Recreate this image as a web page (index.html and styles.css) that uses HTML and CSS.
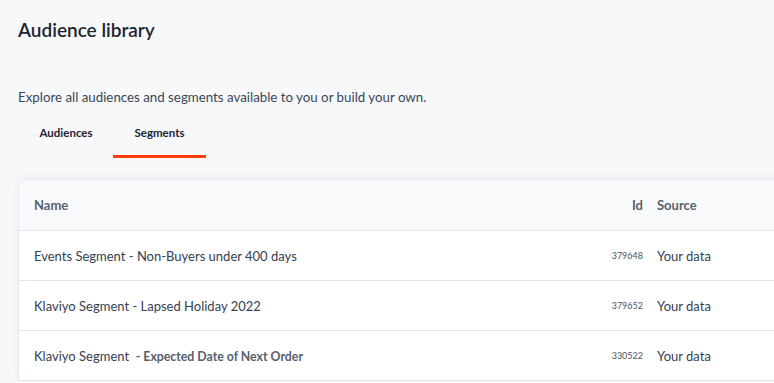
FILE: index.html
```html
<!DOCTYPE html>
<html lang="en">
<head>
    <meta charset="UTF-8">
    <meta name="viewport" content="width=device-width, initial-scale=1.0">
    <title>Audience library</title>
    <link rel="stylesheet" href="styles.css">
</head>
<body>
    <div class="page">
        <h1 class="title">Audience library</h1>
        <p class="intro">Explore all audiences and segments available to you or build your own.</p>

        <div class="tabs">
            <div class="tab">Audiences</div>
            <div class="tab active">Segments</div>
        </div>

        <div class="card">
            <div class="row head">
                <div class="cell name">Name</div>
                <div class="cell id">Id</div>
                <div class="cell source">Source</div>
            </div>
            <div class="row">
                <div class="cell name">Events Segment - Non-Buyers under 400 days</div>
                <div class="cell id">379648</div>
                <div class="cell source">Your data</div>
            </div>
            <div class="row">
                <div class="cell name">Klaviyo Segment - Lapsed Holiday 2022</div>
                <div class="cell id">379652</div>
                <div class="cell source">Your data</div>
            </div>
            <div class="row">
                <div class="cell name">Klaviyo Segment &nbsp;<span class="small">- Expected Date of Next Order</span></div>
                <div class="cell id">330522</div>
                <div class="cell source">Your data</div>
            </div>
        </div>
    </div>
</body>
</html>
```

FILE: styles.css
```css
body {
    margin: 0;
    background-color: #f6f8fa;
    font-family: Lato, "Open Sans", sans-serif;
    color: #2f3a48;
    overflow: hidden;
}
.page {
    padding: 18px 0 0 18px;
    width: 900px;
}
.title {
    margin: 0;
    font-size: 19px;
    font-weight: 600;
    line-height: 24px;
    color: #1d2530;
}
.intro {
    margin: 46px 0 0;
    font-size: 13.3px;
    line-height: 18px;
    color: #3b4756;
}
.tabs {
    display: flex;
    margin: 11px 0 0 1px;
}
.tab {
    width: 94px;
    padding: 9px 0 16px;
    text-align: center;
    font-size: 11.5px;
    font-weight: 700;
    color: #1d2530;
    border-bottom: 3px solid transparent;
}
.tab.active {
    width: 93px;
    border-bottom-color: #ff3d0a;
}
.card {
    margin-top: 21px;
    background: #fff;
    border: 1px solid #e7eaf1;
    border-bottom: none;
    border-radius: 10px 0 0 0;
    box-shadow: 0 -2px 8px rgba(40, 50, 80, 0.05);
    overflow: hidden;
}
.row {
    display: grid;
    grid-template-columns: 1fr 60px 260px;
    align-items: center;
    height: 49px;
    border-bottom: 1px solid #e1e4ec;
    font-size: 13px;
    color: #354152;
}
.row.head {
    height: 50px;
    background: #f8f9fa;
    font-weight: 700;
    color: #58626f;
}
.cell.name {
    padding-left: 15px;
}
.cell.id {
    text-align: right;
    padding-right: 14px;
}
.row:not(.head) .cell.id {
    font-size: 9px;
    color: #4a5361;
}
.small {
    font-size: 12.3px;
    font-weight: 700;
    color: #56606d;
}
```
